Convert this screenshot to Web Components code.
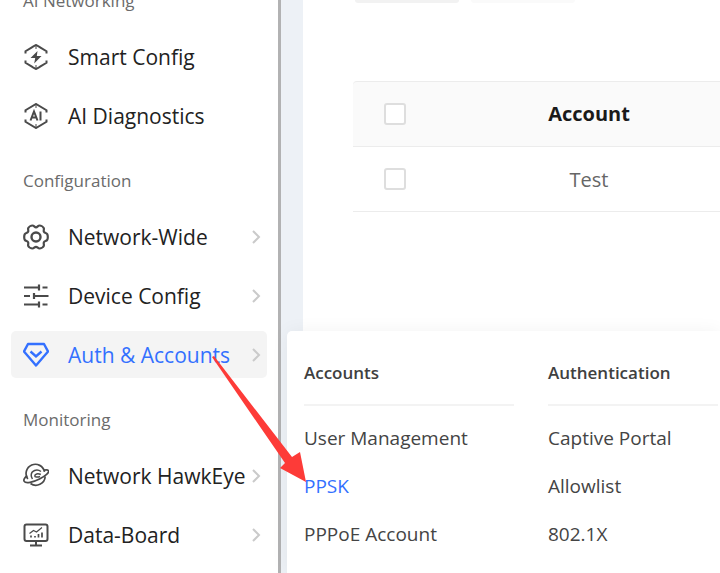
<!DOCTYPE html>
<html lang="en">
<head>
<meta charset="utf-8">
<title>Auth &amp; Accounts</title>
<style>
    html, body{
        height: 100%;
    }
    body{
        margin: 0;
        overflow: hidden;
        background: #edf1f6;
        font-family: "Open Sans", "Noto Sans", sans-serif;
        --blue: #3370ff;
        --line: #ececec;
    }
</style>
</head>
<body>

<app-shell>
    <side-bar slot="side">
        <nav-group label="AI Networking">
            <nav-item icon="bolt">Smart Config</nav-item>
            <nav-item icon="ai">AI Diagnostics</nav-item>
        </nav-group>
        <nav-group label="Configuration">
            <nav-item icon="gear" more>Network-Wide</nav-item>
            <nav-item icon="sliders" more>Device Config</nav-item>
            <nav-item icon="gem" more active>Auth &amp; Accounts</nav-item>
        </nav-group>
        <nav-group label="Monitoring">
            <nav-item icon="planet" more>Network HawkEye</nav-item>
            <nav-item icon="board" more>Data-Board</nav-item>
        </nav-group>
    </side-bar>

    <account-table slot="main"></account-table>

    <fly-menu slot="over">
        <menu-column label="Accounts">
            <menu-link>User Management</menu-link>
            <menu-link active>PPSK</menu-link>
            <menu-link>PPPoE Account</menu-link>
        </menu-column>
        <menu-column label="Authentication">
            <menu-link>Captive Portal</menu-link>
            <menu-link>Allowlist</menu-link>
            <menu-link>802.1X</menu-link>
        </menu-column>
    </fly-menu>
    <red-arrow slot="over"></red-arrow>
</app-shell>

<script>
// small helper: every element gets its markup from a template
function makeTemplate(html){
    var t = document.createElement("template");
    t.innerHTML = html;
    return t;
}

class BaseElement extends HTMLElement {
    constructor(){
        super();
        this.attachShadow({mode:"open"});
        this.shadowRoot.appendChild(this.constructor.template.content.cloneNode(true));
    }
}

//PAGE SHELL
class AppShell extends BaseElement {
    static template = makeTemplate(`
<style>
    :host{
        display: grid;
        grid-template-columns: 281px 1fr;
        position: relative;
        height: 100%;
        overflow: hidden;
    }
    main{
        margin-left: 22px;
        background: white;
        overflow: hidden;
    }
</style>
<slot name="side"></slot>
<main><slot name="main"></slot></main>
<slot name="over"></slot>
`);
}
customElements.define("app-shell", AppShell);

//SIDEBAR
class SideBar extends BaseElement {
    static template = makeTemplate(`
<style>
    :host{
        display: block;
        overflow: hidden;
        background: white;
        border-right: 3px solid #b2b2b3;
    }
    /* the list is scrolled down a little */
    nav{
        display: flex;
        flex-direction: column;
        gap: 27px;
        margin-top: -14px;
        padding: 0 11px;
    }
</style>
<nav><slot></slot></nav>
`);
}
customElements.define("side-bar", SideBar);

class NavGroup extends BaseElement {
    static template = makeTemplate(`
<style>
    :host{
        display: block;
    }
    h2{
        margin: 0 0 17px;
        padding-left: 12px;
        font-size: 17px;
        font-weight: 400;
        line-height: 30px;
        color: #6b6b6b;
    }
    div{
        display: flex;
        flex-direction: column;
        gap: 12px;
    }
</style>
<h2></h2>
<div><slot></slot></div>
`);
    connectedCallback(){
        this.shadowRoot.querySelector("h2").textContent = this.getAttribute("label");
    }
}
customElements.define("nav-group", NavGroup);

var icons = {
    bolt: `
        <path d="M2.5 9.5V7.2L8.5 3.6M2.5 16.5v2.3l6 3.6M23.5 9.5V7.2L17.5 3.6M23.5 16.5v2.3l-6 3.6M10 2.7l3-1.7 3 1.7M10 23.3l3 1.7 3-1.7M8.5 3.6L10 2.7M17.5 3.6L16 2.7M8.5 22.4l1.5.9M17.5 22.4l-1.5.9"/>
        <path d="M13 1v4M13 21v4" stroke-width="1"/>
        <path d="M14.5 7L7.5 14h4.7l-1 5.5 7.3-7.5h-4.7z" fill="currentColor" stroke="none"/>`,
    ai: `
        <path d="M2.5 9.5V7.2L13 1l10.5 6.2v2.3M2.5 16.5v2.3L13 25l10.5-6.2v-2.3"/>
        <path d="M13 1v4M13 21v4" stroke-width="1"/>
        <path d="M7.5 17.5l3.5-9 3.5 9M8.7 14.5h4.600M17.5 8.5v9" stroke-width="2"/>`,
    gear: `
        <path stroke-width="2.2" d="M9.500 1.500c1.500 0 2 1.800 3.500 1.800s2-1.800 3.500-1.800 3.800 1.300 4.300 2.700-.6 2.300.1 3.600 2.500 1 3.300 2.300.8 4.500 0 5.800-2.600 1-3.300 2.300.4 2.200-.1 3.600-2.800 2.700-4.300 2.700-2-1.700-3.500-1.700-2 1.700-3.500 1.700-3.800-1.300-4.300-2.700.6-2.300-.1-3.600-2.500-1-3.300-2.300-.8-4.500 0-5.800 2.600-1 3.300-2.300-.4-2.200.1-3.600S8 1.500 9.500 1.500z"/>
        <circle cx="13" cy="13" r="4.5" stroke-width="2.4"/>`,
    sliders: `
        <path stroke-width="2.200" d="M1 4.500h15M19.500 4.500h5M16 1.500v6M1 13h6M10.500 13H25.500M11 10v6M1 21.500h15M19.500 21.500h5M16 18.500v6"/>`,
    gem: `
        <path stroke-width="2.400" stroke-linejoin="round" d="M5 2h16l4 7.500L13 23.500 1 9.500z"/>
        <path stroke-width="2.400" d="M7.500 9.500l5.500 5 5.500-5"/>`,
    planet: `
        <path stroke-width="1.700" d="M4.800 16A9.300 9.300 0 1 1 21.500 8.800M22.200 13.500A9.300 9.300 0 0 1 7.500 20.500"/>
        <path stroke-width="1.700" d="M4.200 12.500C1.500 14.800.3 17 1.200 18.400c1.600 2.400 9 .8 15.300-2.400 6-3 10-6.600 9-8.300-.5-.9-2.200-1-4.600-.5"/>
        <path stroke-width="1.500" d="M18 8.500c-4-3-9.800-1-9.800 3.800 0 1.500.5 2.700 1.300 3.700M17.800 11.500c-3-1.300-6-.6-6 1.400 0 1.300 2.700 1.500 5.200.6"/>`,
    board: `
        <rect x="1.500" y="2.500" width="23" height="16.500" rx="2"/>
        <path d="M7 23.500h12M13 19v4"/>
        <path d="M8 15.500v-2M12 15.500V14M15.500 15.500V12M19 15.500v-5" stroke-width="1.700"/>
        <path d="M6.500 11.500l4-3 3 1.500L19 5.500" stroke-width="1.200"/>`
};

class NavItem extends BaseElement {
    static template = makeTemplate(`
<style>
    :host{
        display: block;
        color: #222;
    }
    a{
        display: flex;
        align-items: center;
        gap: 19px;
        height: 47px;
        padding: 0 5px 0 12px;
        border-radius: 5px;
        color: inherit;
        text-decoration: none;
        font-size: 21px;
        line-height: 28px;
        white-space: nowrap;
    }
    :host([active]) a{
        background: #f4f4f4;
        color: var(--blue);
    }
    svg{
        flex: none;
        fill: none;
        stroke: currentColor;
    }
    .icon{
        width: 26px;
        height: 26px;
        stroke-width: 2;
        color: #4a4a4a;
    }
    :host([active]) .icon{
        color: var(--blue);
    }
    span{
        flex: 1;
        min-width: 0;
    }
    .more{
        display: none;
        width: 12px;
        height: 14px;
        stroke: #cacaca;
        stroke-width: 2;
    }
    :host([more]) .more{
        display: block;
    }
</style>
<a href="#">
    <svg class="icon" viewBox="0 0 26 26"></svg>
    <span><slot></slot></span>
    <svg class="more" viewBox="0 0 12 14"><path d="M3 1l6 6-6 6"/></svg>
</a>
`);
    connectedCallback(){
        this.shadowRoot.querySelector(".icon").innerHTML = icons[this.getAttribute("icon")];
    }
}
customElements.define("nav-item", NavItem);

//MAIN TABLE
class AccountTable extends BaseElement {
    static template = makeTemplate(`
<style>
    :host{
        display: block;
        padding-left: 50px;
    }
    /* bottom edge of the toolbar */
    .bar{
        display: flex;
        gap: 12px;
        height: 3px;
        margin-bottom: 78px;
        padding-left: 2px;
    }
    .bar i{
        width: 104px;
        border-radius: 0 0 5px 5px;
        background: #f2f2f2;
    }
    .bar i + i{
        background: #fafafa;
    }
    table{
        width: 100%;
        min-width: 388px;
        border-collapse: separate;
        border-spacing: 0;
        table-layout: fixed;
        font-size: 20px;
    }
    col.pick{
        width: 84px;
    }
    th, td{
        height: 64px;
        padding: 0;
        border-bottom: 1px solid var(--line);
        text-align: center;
        vertical-align: middle;
        color: #666;
    }
    th{
        border-top: 1px solid var(--line);
        background: #fafafa;
        color: #1a1a1a;
        font-weight: 700;
        line-height: 26px;
    }
    th:first-child{
        border-top-left-radius: 4px;
    }
    input{
        appearance: none;
        display: block;
        box-sizing: border-box;
        width: 22px;
        height: 22px;
        margin: 0 auto;
        border: 2px solid #dedede;
        border-radius: 3px;
        background: white;
    }
</style>
<div class="bar"><i></i><i></i></div>
<table>
    <colgroup><col class="pick"><col></colgroup>
    <thead>
        <tr><th><input type="checkbox" aria-labelledby="head"></th><th id="head">Account</th></tr>
    </thead>
    <tbody>
        <tr><td><input type="checkbox" aria-labelledby="row"></td><td id="row">Test</td></tr>
    </tbody>
</table>
`);
}
customElements.define("account-table", AccountTable);

//FLY-OUT MENU, lies over the page
class FlyMenu extends BaseElement {
    static template = makeTemplate(`
<style>
    :host{
        position: absolute;
        top: 331px;
        right: 0;
        bottom: 0;
        left: 287px;
        display: grid;
        grid-template-columns: 210px 1fr;
        align-content: start;
        gap: 34px;
        box-sizing: border-box;
        padding: 20px 2px 0 17px;
        border-top-left-radius: 5px;
        background: white;
        box-shadow: 0 0 18px rgba(0, 0, 0, .05);
    }
</style>
<slot></slot>
`);
}
customElements.define("fly-menu", FlyMenu);

class MenuColumn extends BaseElement {
    static template = makeTemplate(`
<style>
    :host{
        display: block;
    }
    h3{
        margin: 0 0 8px;
        padding-bottom: 9px;
        border-bottom: 2px solid #f3f3f3;
        font-size: 17px;
        font-weight: 600;
        line-height: 44px;
        color: #404040;
    }
</style>
<h3></h3>
<slot></slot>
`);
    connectedCallback(){
        this.shadowRoot.querySelector("h3").textContent = this.getAttribute("label");
    }
}
customElements.define("menu-column", MenuColumn);

class MenuLink extends BaseElement {
    static template = makeTemplate(`
<style>
    :host{
        display: block;
    }
    a{
        display: block;
        font-size: 19px;
        line-height: 48px;
        color: #444;
        text-decoration: none;
        white-space: nowrap;
    }
    :host([active]) a{
        color: var(--blue);
    }
</style>
<a href="#"><slot></slot></a>
`);
}
customElements.define("menu-link", MenuLink);

//ARROW from the sidebar item to the menu link
class RedArrow extends BaseElement {
    static template = makeTemplate(`
<style>
    :host{
        position: absolute;
        top: 356px;
        left: 212px;
        pointer-events: none;
    }
    svg{
        display: block;
    }
</style>
<svg width="96" height="128" viewBox="0 0 96 128"><path fill="#fd3b38" d="M0 1l2-1L80 101l8-5 6 30-26-14 5-5z"/></svg>
`);
}
customElements.define("red-arrow", RedArrow);
</script>
</body>
</html>
